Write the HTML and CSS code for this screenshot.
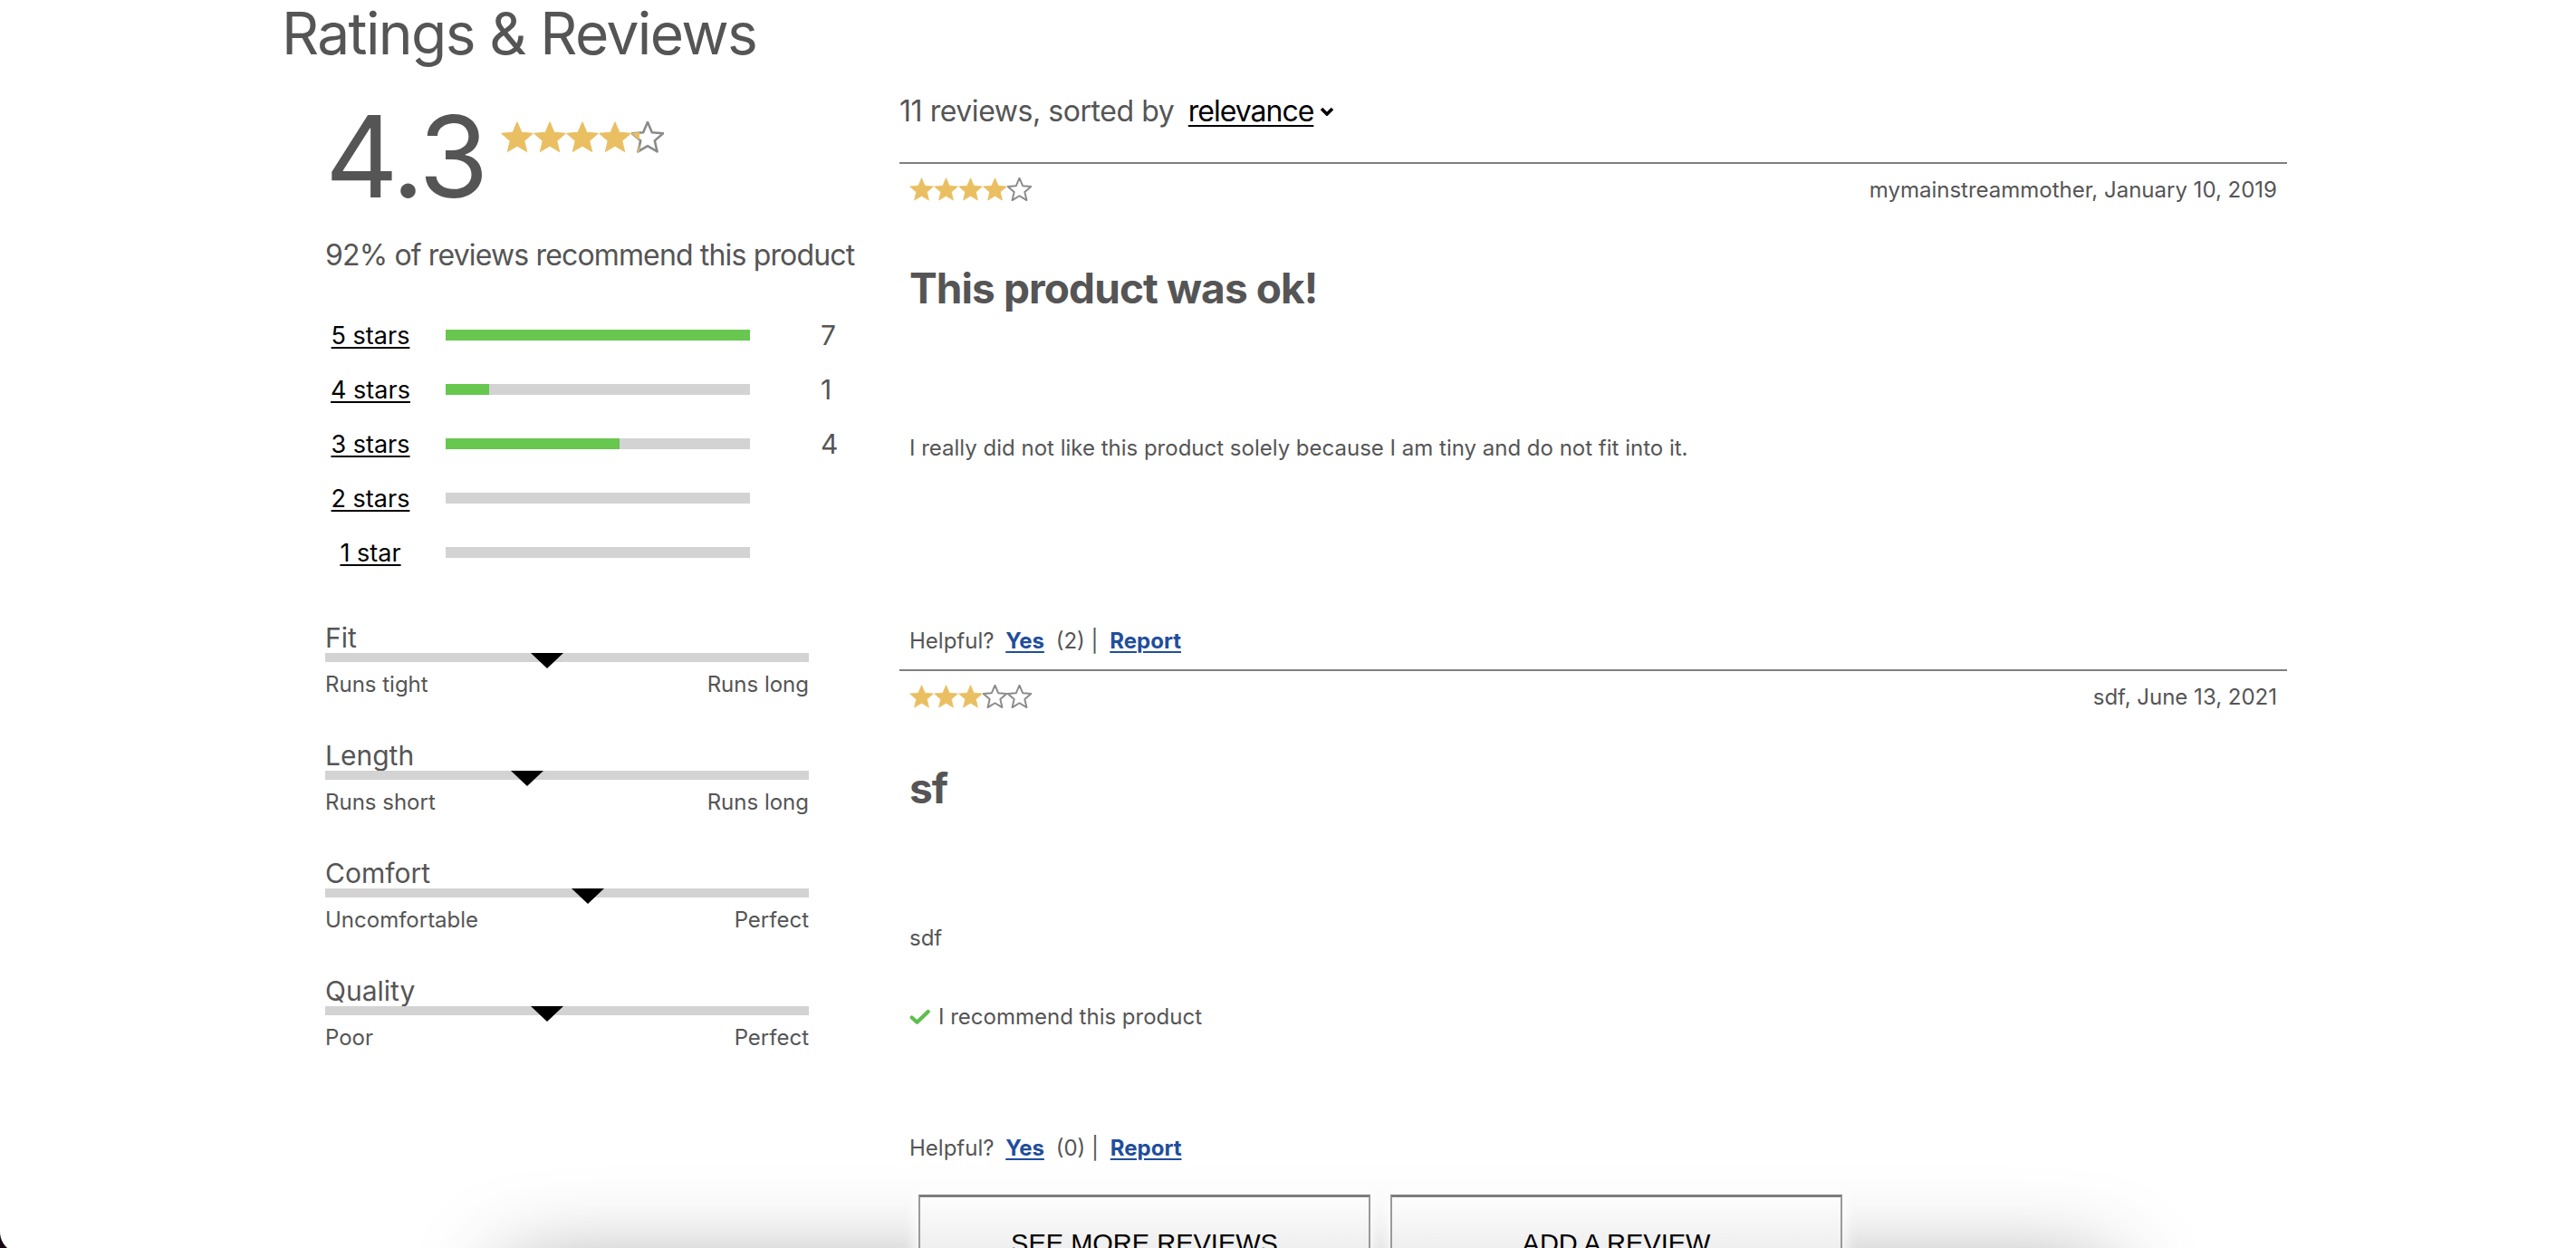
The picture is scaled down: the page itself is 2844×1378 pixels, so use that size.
FILE: index.html
```html
<!DOCTYPE html>
<html lang="en">
<head>
<meta charset="utf-8">
<title>Ratings &amp; Reviews</title>
<link rel="stylesheet" href="styles.css">
</head>
<body>
<svg class="defs" width="0" height="0" aria-hidden="true">
  <defs>
    <path id="star-path" d="M12 17.27L18.18 21l-1.64-7.03L22 9.24l-7.19-.61L12 2 9.19 8.63 2 9.24l5.46 4.73L5.82 21z"/>
  </defs>
</svg>

<main class="ratings">
  <h1 class="ratings__title">Ratings &amp; Reviews</h1>

  <div class="ratings__grid">
    <aside class="summary">
      <div class="summary__score">
        <span class="summary__avg">4.3</span>
        <div class="stars stars--lg">
          <svg class="star star--full" viewBox="1.5 1.5 21 21"><use href="#star-path"/></svg>
          <svg class="star star--full" viewBox="1.5 1.5 21 21"><use href="#star-path"/></svg>
          <svg class="star star--full" viewBox="1.5 1.5 21 21"><use href="#star-path"/></svg>
          <svg class="star star--full" viewBox="1.5 1.5 21 21"><use href="#star-path"/></svg>
          <span class="star-partial">
            <svg class="star star--empty" viewBox="1.5 1.5 21 21"><use href="#star-path"/></svg>
            <span class="star-partial__fill" style="width:25%"><svg class="star star--full" viewBox="1.5 1.5 21 21"><use href="#star-path"/></svg></span>
          </span>
        </div>
      </div>

      <p class="summary__recommend">92% of reviews recommend this product</p>

      <ul class="breakdown">
        <li class="breakdown__row"><a class="breakdown__label">5 stars</a><span class="bar"><span class="bar__fill" style="width:100%"></span></span><span class="breakdown__count">7</span></li>
        <li class="breakdown__row"><a class="breakdown__label">4 stars</a><span class="bar"><span class="bar__fill" style="width:14.3%"></span></span><span class="breakdown__count">1</span></li>
        <li class="breakdown__row"><a class="breakdown__label">3 stars</a><span class="bar"><span class="bar__fill" style="width:57.1%"></span></span><span class="breakdown__count">4</span></li>
        <li class="breakdown__row"><a class="breakdown__label">2 stars</a><span class="bar"><span class="bar__fill" style="width:0%"></span></span><span class="breakdown__count"></span></li>
        <li class="breakdown__row"><a class="breakdown__label">1 star</a><span class="bar"><span class="bar__fill" style="width:0%"></span></span><span class="breakdown__count"></span></li>
      </ul>

      <div class="chars">
        <div class="char">
          <div class="char__name">Fit</div>
          <div class="char__track"><span class="char__marker" style="left:45.8%"></span></div>
          <div class="char__ends"><span>Runs tight</span><span>Runs long</span></div>
        </div>
        <div class="char">
          <div class="char__name">Length</div>
          <div class="char__track"><span class="char__marker" style="left:41.7%"></span></div>
          <div class="char__ends"><span>Runs short</span><span>Runs long</span></div>
        </div>
        <div class="char">
          <div class="char__name">Comfort</div>
          <div class="char__track"><span class="char__marker" style="left:54.4%"></span></div>
          <div class="char__ends"><span>Uncomfortable</span><span>Perfect</span></div>
        </div>
        <div class="char">
          <div class="char__name">Quality</div>
          <div class="char__track"><span class="char__marker" style="left:45.8%"></span></div>
          <div class="char__ends"><span>Poor</span><span>Perfect</span></div>
        </div>
      </div>
    </aside>

    <section class="reviews">
      <div class="reviews__sort">11 reviews, sorted by <span class="sort-select">relevance<svg class="sort-select__chevron" viewBox="0 0 16 10"><polyline points="2,2 8,8 14,2"/></svg></span></div>

      <article class="review">
        <div class="review__head">
          <div class="stars stars--sm">
            <svg class="star star--full" viewBox="1.5 1.5 21 21"><use href="#star-path"/></svg>
            <svg class="star star--full" viewBox="1.5 1.5 21 21"><use href="#star-path"/></svg>
            <svg class="star star--full" viewBox="1.5 1.5 21 21"><use href="#star-path"/></svg>
            <svg class="star star--full" viewBox="1.5 1.5 21 21"><use href="#star-path"/></svg>
            <svg class="star star--empty" viewBox="1.5 1.5 21 21"><use href="#star-path"/></svg>
          </div>
          <span class="review__meta">mymainstreammother, January 10, 2019</span>
        </div>
        <h3 class="review__title">This product was ok!</h3>
        <p class="review__body">I really did not like this product solely because I am tiny and do not fit into it.</p>
        <div class="review__helpful">Helpful? <a class="link">Yes</a> (2) | <a class="link">Report</a></div>
      </article>

      <article class="review review--rec">
        <div class="review__head">
          <div class="stars stars--sm">
            <svg class="star star--full" viewBox="1.5 1.5 21 21"><use href="#star-path"/></svg>
            <svg class="star star--full" viewBox="1.5 1.5 21 21"><use href="#star-path"/></svg>
            <svg class="star star--full" viewBox="1.5 1.5 21 21"><use href="#star-path"/></svg>
            <svg class="star star--empty" viewBox="1.5 1.5 21 21"><use href="#star-path"/></svg>
            <svg class="star star--empty" viewBox="1.5 1.5 21 21"><use href="#star-path"/></svg>
          </div>
          <span class="review__meta">sdf, June 13, 2021</span>
        </div>
        <h3 class="review__title">sf</h3>
        <p class="review__body">sdf</p>
        <div class="review__rec"><svg class="check" viewBox="0 0 24 18"><polyline points="2.8,9.5 8.8,15 21.5,2.8"/></svg>I recommend this product</div>
        <div class="review__helpful">Helpful? <a class="link">Yes</a> (0) | <a class="link">Report</a></div>
      </article>

      <div class="reviews__actions">
        <button class="btn" type="button">See more reviews</button>
        <button class="btn" type="button">Add a review</button>
      </div>
    </section>
  </div>
</main>

<div class="window-corner"></div>
</body>
</html>
```

FILE: styles.css
```css
* { box-sizing: border-box; }

html { overflow: hidden; }

html, body { margin: 0; padding: 0; }

body {
  background: #fff;
  color: #555;
  font-family: Inter, "Noto Sans", Roboto, sans-serif;
}

.defs { position: absolute; width: 0; height: 0; overflow: hidden; }

.ratings {
  position: relative;
  padding: 5px 0 0 311px;
  width: 2525px;
}

.ratings::after {
  content: "";
  position: absolute;
  left: 560px;
  top: 1400px;
  width: 1770px;
  height: 200px;
  box-shadow: 0 0 100px rgba(0, 0, 0, 0.38);
  z-index: -1;
}

.ratings__title {
  margin: 0;
  font-size: 64px;
  line-height: 64px;
  font-weight: 400;
  letter-spacing: -1.6px;
  color: #555;
}

.ratings__grid {
  display: grid;
  grid-template-columns: 600px 1532px;
  column-gap: 34px;
  margin: 41px 0 0 48px;
  align-items: start;
}

/* ---------- summary ---------- */
.summary__score {
  display: flex;
  align-items: flex-start;
  height: 125px;
}

.summary__avg {
  font-size: 125px;
  line-height: 125px;
  letter-spacing: -3px;
  color: #555;
}

.stars { display: flex; }

.star { display: block; flex: none; }
.star--full { fill: #e9bf62; stroke: #e9bf62; stroke-width: 0.6; stroke-linejoin: round; }
.star--empty { fill: none; stroke: #8a8a8a; stroke-width: 1.5; stroke-linejoin: round; }

.stars--lg { margin: 24px 0 0 17px; }
.stars--lg .star { width: 36px; height: 36px; }

.stars--sm .star { width: 27px; height: 27px; }

.star-partial { position: relative; display: block; }
.star-partial__fill {
  position: absolute;
  left: 0;
  top: 0;
  height: 100%;
  overflow: hidden;
}

.summary__recommend {
  margin: 27px 0 0;
  font-size: 32px;
  line-height: 40px;
  letter-spacing: -0.85px;
  white-space: nowrap;
}

.breakdown {
  list-style: none;
  margin: 38px 0 0;
  padding: 0;
}

.breakdown__row {
  display: flex;
  align-items: center;
  height: 60px;
}

.breakdown__label {
  width: 100px;
  text-align: center;
  font-size: 27px;
  color: #000;
  text-decoration: underline;
  text-decoration-thickness: 2px;
  text-underline-offset: 3px;
}

.bar {
  display: flex;
  margin-left: 33px;
  width: 336px;
  height: 12px;
  background: #d3d3d3;
}

.bar__fill { height: 100%; background: #67c74f; }

.breakdown__count {
  margin-left: 78px;
  font-size: 30px;
  color: #555;
}

.chars {
  display: flex;
  flex-direction: column;
  gap: 49px;
  margin-top: 49px;
  width: 534px;
}

.char__name {
  font-size: 30px;
  line-height: 30px;
}

.char__track {
  position: relative;
  margin-top: 2px;
  height: 10px;
  background: #d3d3d3;
}

.char__marker {
  position: absolute;
  top: 0;
  width: 0;
  height: 0;
  border-left: 18px solid transparent;
  border-right: 18px solid transparent;
  border-top: 17px solid #000;
  transform: translateX(-50%);
}

.char__ends {
  display: flex;
  justify-content: space-between;
  margin-top: 11px;
  font-size: 24px;
  line-height: 28px;
}

/* ---------- reviews ---------- */
.reviews__sort {
  margin: 0 0 43px;
  font-size: 32px;
  line-height: 26px;
  letter-spacing: -0.45px;
  white-space: nowrap;
}

.sort-select {
  display: inline-flex;
  align-items: center;
  margin-left: 7px;
  color: #000;
  letter-spacing: -1px;
  text-decoration: underline;
  text-decoration-thickness: 2px;
  text-underline-offset: 4px;
}

.sort-select__chevron {
  width: 16px;
  height: 10px;
  margin-left: 7px;
  fill: none;
  stroke: #000;
  stroke-width: 3.6;
}

.review {
  display: flex;
  flex-direction: column;
  height: 560px;
  border-top: 2px solid #808080;
  padding: 15px 11px 16px;
}

.review__head {
  display: flex;
  justify-content: space-between;
  align-items: center;
  height: 27px;
}

.review__meta {
  font-size: 24px;
  line-height: 27px;
}

.review__title {
  margin: 67px 0 0;
  font-size: 46px;
  line-height: 56px;
  font-weight: 700;
  letter-spacing: -0.9px;
  color: #555;
}

.review__body {
  margin: 134px 0 0;
  font-size: 24px;
  line-height: 30px;
}

.review--rec .review__title { margin-top: 59px; }
.review--rec .review__body { margin-top: 123px; }

.review__rec {
  display: flex;
  align-items: center;
  gap: 9px;
  margin-top: 57px;
  font-size: 24px;
  line-height: 30px;
}

.check {
  width: 23px;
  height: 18px;
  fill: none;
  stroke: #5cbf4a;
  stroke-width: 4.4;
  stroke-linecap: round;
  stroke-linejoin: round;
}

.review__helpful {
  margin-top: auto;
  font-size: 24px;
  line-height: 30px;
}

.link {
  margin: 0 6px;
  color: #1f4e9c;
  font-weight: 700;
  text-decoration: underline;
  text-decoration-thickness: 2px;
  text-underline-offset: 3px;
}

.reviews__actions {
  display: flex;
  gap: 22px;
  margin: 20px 0 0 21px;
}

.btn {
  width: 499px;
  height: 108px;
  border: 2px solid #9a9a9a;
  border-top: 3px solid #7c7c7c;
  background: linear-gradient(#fdfdfd, #e3e3e3);
  box-shadow: 0 0 14px 4px rgba(255, 255, 255, 0.9);
  font-family: "Liberation Sans", Arial, sans-serif;
  font-size: 29px;
  color: #000;
  text-transform: uppercase;
  padding: 0;
}

.window-corner {
  position: fixed;
  left: 0;
  bottom: 0;
  width: 24px;
  height: 18px;
  background: radial-gradient(circle 24px at 24px 0, transparent 23.5px, #150a15 24.5px);
}
```
